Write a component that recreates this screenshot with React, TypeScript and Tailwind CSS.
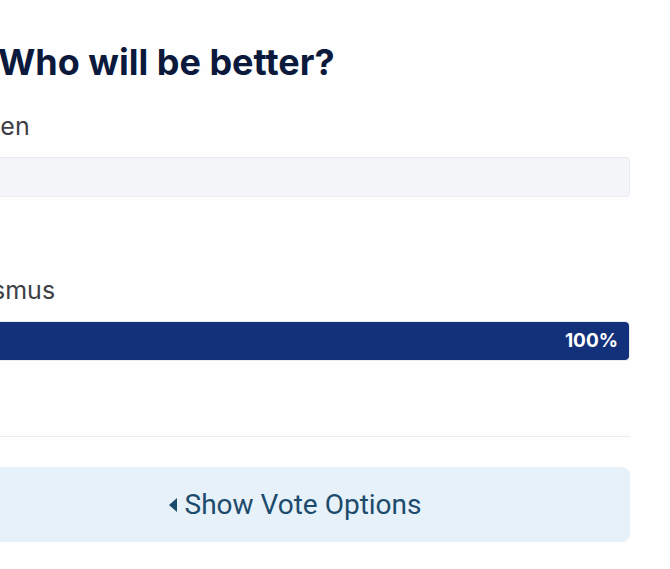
const options = [
  { label: "Allen", percent: 0, inset: "pl-[11px]" },
  { label: "Rasmus", percent: 100, inset: "pl-[2px]" },
];

// Poll result card, cropped on the left like the reference.
export default function App() {
  return (
    <div className="min-h-screen bg-[#fefefe] overflow-hidden font-['Inter',sans-serif]">
      <div className="-ml-10 w-[670px] pt-[40px]">
        <h1 className="pl-[38px] text-[36px] leading-[44px] font-bold text-[#0b1a3c]">
          Who will be better?
        </h1>

        <div className="mt-[27px] flex flex-col gap-[78px]">
          {options.map((option) => (
            <div key={option.label}>
              <p className={`${option.inset} text-[25px] leading-[30px] text-[#3d3f45]`}>
                {option.label}
              </p>
              <div className="mt-[16px] h-[40px] rounded-[4px] border border-[#e9ebf1] bg-[#f4f5f9] overflow-hidden">
                {option.percent > 0 && (
                  <div
                    className="h-full bg-[#13307b] flex items-center justify-end pr-[11px] rounded-[4px]"
                    style={{ width: `${option.percent}%` }}
                  >
                    <span className="text-white text-[19px] font-bold">
                      {option.percent}%
                    </span>
                  </div>
                )}
              </div>
            </div>
          ))}
        </div>

        <div className="mt-[75px] h-px bg-[#ececec]" />

        <button className="mt-[30px] w-full h-[75px] rounded-[8px] bg-[#e6f1fa] flex items-center justify-center gap-[8px] text-[#1d4b6c] font-['Roboto',sans-serif] text-[28px]">
          <svg width="8" height="14" viewBox="0 0 8 14" className="mt-[1px]">
            <path d="M8 0 L0 7 L8 14 Z" fill="currentColor" />
          </svg>
          Show Vote Options
        </button>
      </div>
    </div>
  );
}
